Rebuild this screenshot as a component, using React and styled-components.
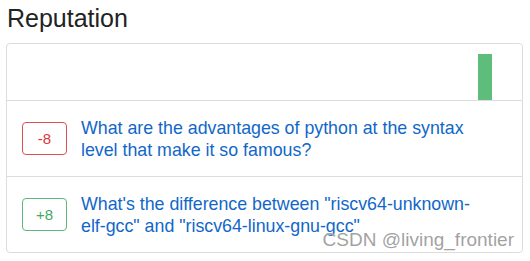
import styled, { createGlobalStyle } from 'styled-components';

const GlobalStyle = createGlobalStyle`
  body {
    margin: 0;
    background: #fff;
    font-family: "Liberation Sans", Arial, sans-serif;
  }
`;

const Page = styled.div`
  position: relative;
  width: 530px;
  height: 261px;
  padding: 3px 8px 0 6px;
  box-sizing: border-box;
`;

const Heading = styled.h2`
  margin: 0 0 10px 1px;
  font-size: 25px;
  line-height: 30px;
  font-weight: 400;
  color: #222;
`;

const Card = styled.div`
  border: 1px solid #dcdcdc;
  border-radius: 4px;
  width: 517px;
  box-sizing: border-box;
`;

const Chart = styled.div`
  display: flex;
  justify-content: flex-end;
  align-items: flex-end;
  height: 56px;
  padding-right: 30px;
  border-bottom: 1px solid #dcdcdc;
`;

const Bar = styled.div`
  width: 14px;
  background: #5fbd7c;
`;

const Row = styled.div`
  display: flex;
  align-items: center;
  gap: 14px;
  height: 75px;
  padding: 0 36px 0 15px;
  & + & {
    border-top: 1px solid #dcdcdc;
  }
`;

const Badge = styled.div`
  flex: none;
  width: 45px;
  height: 33px;
  box-sizing: border-box;
  display: flex;
  align-items: center;
  justify-content: center;
  border: 1px solid ${(p) => (p.$up ? '#5cb97a' : '#df4e52')};
  border-radius: 4px;
  color: ${(p) => (p.$up ? '#3fa862' : '#d9383d')};
  font-size: 15px;
`;

const Title = styled.a`
  font-size: 17.8px;
  line-height: 22px;
  color: #1167c9;
  text-decoration: none;
`;

const Watermark = styled.div`
  position: absolute;
  right: 16px;
  bottom: 10px;
  font-size: 19px;
  color: rgba(130, 130, 130, 0.75);
  text-shadow: 0 0 1px #fff;
`;

const rows = [
  { score: -8, title: 'What are the advantages of python at the syntax level that make it so famous?' },
  { score: 8, title: 'What\'s the difference between "riscv64-unknown-elf-gcc" and "riscv64-linux-gnu-gcc"' },
];

export default function App() {
  return (
    <Page>
      <GlobalStyle />
      <Heading>Reputation</Heading>
      <Card>
        <Chart>
          <Bar style={{ height: 46 }} />
        </Chart>
        {rows.map((r) => (
          <Row key={r.title}>
            <Badge $up={r.score > 0}>{r.score > 0 ? `+${r.score}` : r.score}</Badge>
            <Title href="#">{r.title}</Title>
          </Row>
        ))}
      </Card>
      <Watermark>CSDN @living_frontier</Watermark>
    </Page>
  );
}
